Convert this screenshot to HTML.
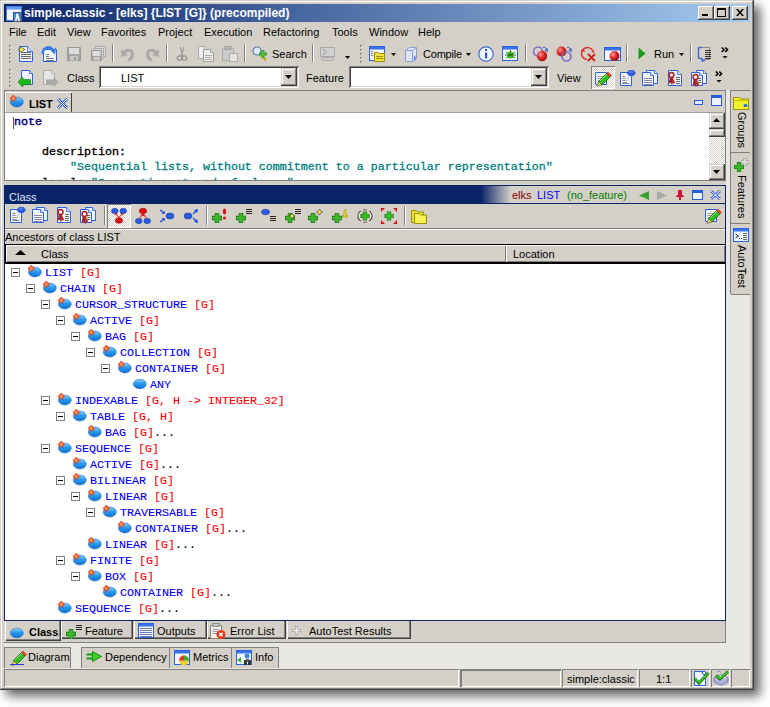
<!DOCTYPE html><html><head><meta charset="utf-8"><style>
*{box-sizing:border-box;margin:0;padding:0}
html,body{width:770px;height:707px;overflow:hidden;background:#fff}
body{position:relative;font-family:"Liberation Sans",sans-serif;font-size:11px;color:#000}
.a{position:absolute}
svg{position:absolute;overflow:visible}
#win{left:0;top:0;width:754px;height:690px;background:#d4d0c8;
 box-shadow:inset -1px -1px #404040,inset 1px 1px #d4d0c8,inset -2px -2px #808080,inset 2px 2px #fff,6px 6px 10px rgba(0,0,0,.62)}
.tbtn{width:16px;height:14px;background:#d4d0c8;box-shadow:inset -1px -1px #404040,inset 1px 1px #fff,inset -2px -2px #808080}
.t{position:absolute;white-space:nowrap;line-height:13px}
.grip{position:absolute;width:2px;background:repeating-linear-gradient(180deg,#fff 0 1px,#808080 1px 2px,transparent 2px 3px)}
.sep{position:absolute;width:2px;box-shadow:inset 1px 0 #808080,inset -1px 0 #fff}
.mono{position:absolute;font-family:"Liberation Mono",monospace;font-weight:normal;font-size:11.67px;letter-spacing:0px;-webkit-text-stroke:0.12px currentColor;white-space:nowrap;line-height:14px}
.combo{position:absolute;height:21px;background:#fff;box-shadow:inset 1px 1px #808080,inset -1px -1px #fff,inset 2px 2px #404040,inset -2px -2px #d4d0c8}
.cbtn{position:absolute;width:16px;height:17px;background:#d4d0c8;box-shadow:inset -1px -1px #404040,inset 1px 1px #d4d0c8,inset -2px -2px #808080,inset 2px 2px #fff}
.btn3{background:#d4d0c8;box-shadow:inset -1px -1px #404040,inset 1px 1px #d4d0c8,inset -2px -2px #808080,inset 2px 2px #fff}
.rt{position:absolute;white-space:nowrap;transform-origin:0 0;transform:rotate(90deg);line-height:13px}
</style></head><body>
<div id="win" class="a"></div>
<div class="a" style="left:4px;top:4px;width:746px;height:18px;background:linear-gradient(90deg,#0a246a,#a6caf0)"></div>
<svg style="left:6px;top:6px" width="16" height="16" viewBox="0 0 16 16">
<rect x="0.5" y="0.5" width="15" height="14" fill="#eef2ff" stroke="#4a7ae8"/>
<rect x="1" y="1" width="14" height="2.5" fill="#6a9af8"/>
<rect x="7.5" y="6.5" width="8" height="9" fill="#3a80e8" stroke="#555"/>
<path d="M10.5 7.5h1.5l2 7.5h-1.5l-1-3-1 3h-1.5z" fill="#fff"/>
</svg>
<div class="t" style="left:24px;top:6px;color:#fff;font-weight:bold;font-size:12px;line-height:14px">simple.classic - [elks] {LIST [G]} (precompiled)</div>
<div class="a tbtn" style="left:698px;top:6px"><div class="a" style="left:4px;top:8px;width:6px;height:2px;background:#000"></div></div>
<div class="a tbtn" style="left:714px;top:6px"><div class="a" style="left:3px;top:2px;width:9px;height:9px;border:1px solid #000;border-top-width:2px"></div></div>
<div class="a tbtn" style="left:732px;top:6px"><svg style="left:4px;top:3px" width="8" height="7"><path d="M0 0h2l2 2.5L6 0h2L5 3.5 8 7H6L4 4.5 2 7H0l3-3.5z" fill="#000"/></svg></div>
<div class="t" style="left:9px;top:26px">File</div>
<div class="t" style="left:37px;top:26px">Edit</div>
<div class="t" style="left:67px;top:26px">View</div>
<div class="t" style="left:101px;top:26px">Favorites</div>
<div class="t" style="left:158px;top:26px">Project</div>
<div class="t" style="left:204px;top:26px">Execution</div>
<div class="t" style="left:263px;top:26px">Refactoring</div>
<div class="t" style="left:332px;top:26px">Tools</div>
<div class="t" style="left:369px;top:26px">Window</div>
<div class="t" style="left:418px;top:26px">Help</div>
<div class="a" style="left:9px;top:45px;width:2px;height:2px;background:#fff;box-shadow:inset 1px 1px #808080"></div>
<div class="a" style="left:9px;top:49px;width:2px;height:2px;background:#fff;box-shadow:inset 1px 1px #808080"></div>
<div class="a" style="left:9px;top:53px;width:2px;height:2px;background:#fff;box-shadow:inset 1px 1px #808080"></div>
<div class="a" style="left:9px;top:57px;width:2px;height:2px;background:#fff;box-shadow:inset 1px 1px #808080"></div>
<div class="a" style="left:9px;top:61px;width:2px;height:2px;background:#fff;box-shadow:inset 1px 1px #808080"></div>
<svg style="left:18px;top:46px" width="16" height="16" viewBox="0 0 16 16"><path d="M1.5 0.5H9.5L14.5 5.5V15.5H1.5Z" fill="#f4f6ff" stroke="#2a62e0"/><path d="M9.5 0.5V5.5H14.5" fill="#d8e4ff" stroke="#2a62e0" stroke-width=".8"/><rect x="3" y="6" width="10" height="1" fill="#666"/><rect x="3" y="8" width="10" height="1" fill="#666"/><rect x="3" y="10" width="10" height="1" fill="#666"/><rect x="3" y="12" width="10" height="1" fill="#666"/><path d="M3.5 0.0Q4.1 2.9 7.0 3.5Q4.1 4.1 3.5 7.0Q2.9 4.1 0.0 3.5Q2.9 2.9 3.5 0.0Z" fill="#fff23a" stroke="#444" stroke-width=".7"/></svg>
<svg style="left:42px;top:46px" width="16" height="16" viewBox="0 0 16 16"><path d="M1.5 3.5H14.5V15.5H1.5Z" fill="#f4f6ff" stroke="#2a62e0"/><rect x="4" y="8" width="3" height="1" fill="#777"/><rect x="4" y="10" width="3" height="1" fill="#777"/><rect x="4" y="12" width="8" height="1" fill="#777"/><rect x="4" y="14" width="8" height="1" fill="#777"/><path d="M1 8C0 2 7 -1 11 4" fill="none" stroke="#3a7ae8" stroke-width="2.6"/><path d="M8.5 4.5L14 2L13 8.5Z" fill="#3a7ae8"/></svg>
<svg style="left:66px;top:46px" width="16" height="16" viewBox="0 0 16 16"><path d="M1.5 1.5H14.5V14.5H1.5Z" fill="#a4a4a4" stroke="#999"/><rect x="3" y="2" width="10" height="6" fill="#dcdcdc"/><rect x="4" y="10" width="8" height="4.5" fill="#c8c8c8"/><rect x="8" y="11" width="2" height="3" fill="#999"/></svg>
<svg style="left:90px;top:46px" width="16" height="16" viewBox="0 0 16 16"><path d="M5.5 0.5H15.5V10.5H5.5Z" fill="#ddd" stroke="#aaa"/><path d="M3.5 2.5H13.5V12.5H3.5Z" fill="#ddd" stroke="#aaa"/><path d="M1.5 4.5H11.5V14.5H1.5Z" fill="#a4a4a4" stroke="#999"/><rect x="2.5" y="5" width="8" height="5" fill="#dcdcdc"/><rect x="3.5" y="11" width="6" height="3.5" fill="#c8c8c8"/></svg>
<div class="sep" style="left:112px;top:44px;height:18px"></div>
<svg style="left:120px;top:46px" width="16" height="16" viewBox="0 0 16 16"><path d="M4.5 6.5C6 3.5 12.5 3 12.5 8.5C12.5 11 10.5 13 8.5 14.5" fill="none" stroke="#a8a8a8" stroke-width="3"/><path d="M1 3.5L1.5 11L8 9Z" fill="#a8a8a8"/></svg>
<svg style="left:144px;top:46px" width="16" height="16" viewBox="0 0 16 16"><path d="M11.5 6.5C10 3.5 3.5 3 3.5 8.5C3.5 11 5.5 13 7.5 14.5" fill="none" stroke="#a8a8a8" stroke-width="3"/><path d="M15 3.5L14.5 11L8 9Z" fill="#a8a8a8"/></svg>
<div class="sep" style="left:166px;top:44px;height:18px"></div>
<svg style="left:174px;top:46px" width="16" height="16" viewBox="0 0 16 16"><path d="M6 1L9 10M10 1L7 10" stroke="#999" stroke-width="1.2"/><circle cx="5.5" cy="12" r="2.2" fill="none" stroke="#999" stroke-width="1.3"/><circle cx="10.5" cy="12" r="2.2" fill="none" stroke="#999" stroke-width="1.3"/></svg>
<svg style="left:198px;top:46px" width="16" height="16" viewBox="0 0 16 16"><path d="M0.5 0.5H6.5L9.5 3.5V12.5H0.5Z" fill="#eee" stroke="#aaa"/><path d="M6.5 0.5V3.5H9.5" fill="#d8e4ff" stroke="#aaa" stroke-width=".8"/><path d="M5.5 3.5H12.5L15.5 6.5V15.5H5.5Z" fill="#eee" stroke="#999"/><path d="M12.5 3.5V6.5H15.5" fill="#d8e4ff" stroke="#999" stroke-width=".8"/><rect x="7" y="9" width="7" height="1" fill="#aaa"/><rect x="7" y="11" width="7" height="1" fill="#aaa"/><rect x="7" y="13" width="7" height="1" fill="#aaa"/><rect x="7" y="15" width="7" height="1" fill="#aaa"/></svg>
<svg style="left:222px;top:46px" width="16" height="16" viewBox="0 0 16 16"><path d="M0.5 2.5H11.5V14.5H0.5Z" fill="#ccc" stroke="#aaa"/><rect x="3" y="0.5" width="6" height="3" fill="#bbb" stroke="#999" stroke-width=".8"/><path d="M7.5 7.5H15.5V15.5H7.5Z" fill="#e4e4e4" stroke="#aaa"/></svg>
<div class="sep" style="left:244px;top:44px;height:18px"></div>
<svg style="left:252px;top:46px" width="16" height="16" viewBox="0 0 16 16"><circle cx="5" cy="5" r="4" fill="#dbeeff" stroke="#5a7ab0" stroke-width="1.2"/><path d="M8 8L14 14.5" stroke="#c8b000" stroke-width="2.5"/><path d="M11 4V12M7 8H15" stroke="#2a9a2a" stroke-width="2.8"/><path d="M11 4.5V11.5M7.5 8H14.5" stroke="#5ad04a" stroke-width="1.2"/></svg>
<div class="t" style="left:272px;top:48px;">Search</div>
<div class="sep" style="left:312px;top:44px;height:18px"></div>
<svg style="left:319px;top:46px" width="16" height="16" viewBox="0 0 16 16"><rect x="1.5" y="1.5" width="14" height="9" fill="#d0d0d0" stroke="#aaa"/><path d="M4 3L7 6 4 9" fill="none" stroke="#aaa" stroke-width="1.5"/><rect x="3" y="11.5" width="12" height="3" rx="1.5" fill="#ccc" stroke="#aaa"/></svg>
<svg style="left:345px;top:56px" width="5" height="3"><path d="M0 0h5L2.5 3z" fill="#000"/></svg>
<div class="a" style="left:360px;top:45px;width:2px;height:2px;background:#fff;box-shadow:inset 1px 1px #808080"></div>
<div class="a" style="left:360px;top:49px;width:2px;height:2px;background:#fff;box-shadow:inset 1px 1px #808080"></div>
<div class="a" style="left:360px;top:53px;width:2px;height:2px;background:#fff;box-shadow:inset 1px 1px #808080"></div>
<div class="a" style="left:360px;top:57px;width:2px;height:2px;background:#fff;box-shadow:inset 1px 1px #808080"></div>
<div class="a" style="left:360px;top:61px;width:2px;height:2px;background:#fff;box-shadow:inset 1px 1px #808080"></div>
<svg style="left:369px;top:46px" width="16" height="16" viewBox="0 0 16 16"><rect x="0.5" y="0.5" width="15" height="14" fill="#f4f6ff" stroke="#2a62e0"/><rect x="1" y="1" width="14" height="2.5" fill="#3a72e8"/><rect x="2" y="5" width="2" height="1" fill="#888"/><rect x="2" y="7" width="2" height="1" fill="#888"/><rect x="2" y="9" width="2" height="1" fill="#888"/><path d="M5.5 6.5H9L10 7.5H15.5V15.5H5.5Z" fill="#f0e040" stroke="#a09000"/><rect x="7" y="10" width="7" height="1" fill="#a09000"/><rect x="7" y="12" width="7" height="1" fill="#a09000"/></svg>
<svg style="left:391px;top:53px" width="5" height="3"><path d="M0 0h5L2.5 3z" fill="#000"/></svg>
<svg style="left:403px;top:46px" width="16" height="16" viewBox="0 0 16 16"><path d="M2.5 4.5L6.5 1.5H13.5V12.5L9.5 15.5H2.5Z" fill="#dce6f8" stroke="#8aa0d0"/><path d="M2.5 4.5H9.5V15.5M9.5 4.5L13.5 1.5" fill="none" stroke="#8aa0d0"/><path d="M11 9C13 11 14 13 12 15 10 13 11 11 11 9Z" fill="#5a8ae8"/></svg>
<div class="t" style="left:423px;top:48px;letter-spacing:-0.2px">Compile</div>
<svg style="left:466px;top:53px" width="5" height="3"><path d="M0 0h5L2.5 3z" fill="#000"/></svg>
<svg style="left:478px;top:46px" width="16" height="16" viewBox="0 0 16 16"><circle cx="8" cy="8" r="7.2" fill="#f4f8ff" stroke="#3a6ad8" stroke-width="1.2"/><rect x="7" y="6.5" width="2.2" height="6" fill="#2a5ad0"/><rect x="7" y="3" width="2.2" height="2" fill="#2a5ad0"/></svg>
<svg style="left:502px;top:46px" width="16" height="16" viewBox="0 0 16 16"><rect x="0.5" y="0.5" width="15" height="14" fill="#f4f6ff" stroke="#2a62e0"/><rect x="1" y="1" width="14" height="2.5" fill="#3a72e8"/><ellipse cx="8.5" cy="9" rx="3" ry="3.5" fill="#40c020"/><path d="M4 6L13 12M13 6L4 12M3 9H14M8.5 4V6" stroke="#207010" stroke-width="1"/></svg>
<div class="sep" style="left:525px;top:44px;height:18px"></div>
<svg style="left:532px;top:46px" width="16" height="16" viewBox="0 0 16 16"><defs><radialGradient id="rb" cx=".35" cy=".35" r=".7"><stop offset="0" stop-color="#ff9a9a"/><stop offset=".5" stop-color="#e02828"/><stop offset="1" stop-color="#a01010"/></radialGradient></defs><circle cx="6" cy="5.5" r="4.5" fill="none" stroke="#7a70c8" stroke-width="1.6"/><circle cx="10" cy="10" r="5.2" fill="url(#rb)"/><path d="M11 1.5C13 1 14.5 2 14.5 4M13 4.5L15 2.5 15.5 5.5Z" fill="none" stroke="#3a5ab8" stroke-width="1"/></svg>
<svg style="left:556px;top:46px" width="16" height="16" viewBox="0 0 16 16"><defs><radialGradient id="rb" cx=".35" cy=".35" r=".7"><stop offset="0" stop-color="#ff9a9a"/><stop offset=".5" stop-color="#e02828"/><stop offset="1" stop-color="#a01010"/></radialGradient></defs><circle cx="5.5" cy="5.5" r="5" fill="url(#rb)"/><circle cx="10.5" cy="10.5" r="4.5" fill="none" stroke="#7a70c8" stroke-width="1.6"/><path d="M11 1.5C13 1 14.5 2 14.5 4M13 4.5L15 2.5 15.5 5.5Z" fill="none" stroke="#3a5ab8" stroke-width="1"/></svg>
<svg style="left:580px;top:46px" width="16" height="16" viewBox="0 0 16 16"><path d="M13.5 7A6 6 0 1 0 7 13.5" fill="none" stroke="#e03030" stroke-width="1.5"/><path d="M1 5L3.5 2L5 6Z" fill="#e03030"/><path d="M8 8L15 15M15 8L8 15" stroke="#d02020" stroke-width="1.8"/></svg>
<svg style="left:604px;top:46px" width="16" height="16" viewBox="0 0 16 16"><defs><radialGradient id="rb" cx=".35" cy=".35" r=".7"><stop offset="0" stop-color="#ff9a9a"/><stop offset=".5" stop-color="#e02828"/><stop offset="1" stop-color="#a01010"/></radialGradient></defs><rect x="0.5" y="1.5" width="16" height="13" fill="#f4f6ff" stroke="#2a62e0"/><rect x="1" y="2" width="15" height="2.5" fill="#3a72e8"/><circle cx="10.5" cy="10" r="5" fill="url(#rb)"/></svg>
<div class="sep" style="left:626px;top:44px;height:18px"></div>
<svg style="left:638px;top:47px" width="8" height="13" viewBox="0 0 8 13"><path d="M0.5 0.5L7.5 6.5 0.5 12.5z" fill="#1a9a1a"/></svg>
<div class="t" style="left:654px;top:48px;">Run</div>
<svg style="left:679px;top:53px" width="5" height="3"><path d="M0 0h5L2.5 3z" fill="#000"/></svg>
<div class="sep" style="left:690px;top:44px;height:18px"></div>
<svg style="left:697px;top:46px" width="16" height="16" viewBox="0 0 16 16"><path d="M5 1.5H2.5Q1.5 1.5 1.5 2.5V11.5Q1.5 12.5 2.5 12.5H5" fill="none" stroke="#3a6ad8" stroke-width="1.4"/><path d="M4.5 12.5L8 14.5 4.5 15.5" fill="#3a6ad8" stroke="#3a6ad8" stroke-width="1"/><path d="M5 1.5H12.5V13.5H6" fill="none" stroke="#888" stroke-width="1"/><rect x="8" y="4" width="6" height="1" fill="#333"/><rect x="8" y="6" width="6" height="1" fill="#333"/><rect x="8" y="8" width="6" height="1" fill="#333"/><rect x="8" y="10" width="6" height="1" fill="#333"/><rect x="8" y="12" width="6" height="1" fill="#333"/></svg>
<svg style="left:721px;top:47px" width="8" height="12" viewBox="0 0 8 12"><path d="M0.8 0.5L3 2.8 0.8 5M4.3 0.5L6.5 2.8 4.3 5" fill="none" stroke="#000" stroke-width="1.6"/><path d="M1.5 9H6.5L4 11.5Z" fill="#000"/></svg>
<div class="a" style="left:9px;top:69px;width:2px;height:2px;background:#fff;box-shadow:inset 1px 1px #808080"></div>
<div class="a" style="left:9px;top:73px;width:2px;height:2px;background:#fff;box-shadow:inset 1px 1px #808080"></div>
<div class="a" style="left:9px;top:77px;width:2px;height:2px;background:#fff;box-shadow:inset 1px 1px #808080"></div>
<div class="a" style="left:9px;top:81px;width:2px;height:2px;background:#fff;box-shadow:inset 1px 1px #808080"></div>
<div class="a" style="left:9px;top:85px;width:2px;height:2px;background:#fff;box-shadow:inset 1px 1px #808080"></div>
<svg style="left:17px;top:70px" width="16" height="16" viewBox="0 0 16 16"><path d="M4.5 0.5H12.5L15.5 3.5V14.5H4.5Z" fill="#f0f2ff" stroke="#2a62e0"/><path d="M12.5 0.5V3.5H15.5" fill="#d8e4ff" stroke="#2a62e0" stroke-width=".8"/><path d="M13.5 9.5H6V7.5H5L1 12 5 16.5H6V14.5H13.5Z" fill="#18b818" stroke="#0a800a" stroke-width=".6"/></svg>
<svg style="left:42px;top:70px" width="16" height="16" viewBox="0 0 16 16"><path d="M1.5 0.5H9.5L12.5 3.5V14.5H1.5Z" fill="#e4e4e4" stroke="#aaa"/><path d="M9.5 0.5V3.5H12.5" fill="#d8e4ff" stroke="#aaa" stroke-width=".8"/><path d="M4 9.5H11.5V7.5H12.5L16 12 12.5 16.5H11.5V14.5H4Z" fill="#a8a8a8"/></svg>
<div class="t" style="left:67px;top:72px;">Class</div>
<div class="combo" style="left:99px;top:66px;width:200px;height:22px"></div>
<div class="cbtn" style="left:281px;top:68px;width:16px;height:18px"></div>
<svg style="left:285px;top:75px" width="7" height="4" viewBox="0 0 7 4"><path d="M0 0h7L3.5 4z" fill="#000"/></svg>
<div class="t" style="left:121px;top:72px;">LIST</div>
<div class="t" style="left:306px;top:72px;">Feature</div>
<div class="combo" style="left:349px;top:66px;width:200px;height:22px"></div>
<div class="cbtn" style="left:531px;top:68px;width:16px;height:18px"></div>
<svg style="left:535px;top:75px" width="7" height="4" viewBox="0 0 7 4"><path d="M0 0h7L3.5 4z" fill="#000"/></svg>
<div class="t" style="left:557px;top:72px;">View</div>
<div class="a" style="left:591px;top:66px;width:24px;height:23px;box-shadow:inset 1px 1px #808080,inset -1px -1px #fff;background:repeating-conic-gradient(#fff 0 25%,#d4d0c8 0 50%) 0 0/2px 2px"></div>
<svg style="left:595px;top:70px" width="16" height="16" viewBox="0 0 16 16"><path d="M0.5 2.5H11.5V14.5H0.5Z" fill="#f4f6ff" stroke="#2a62e0"/><rect x="2.5" y="6" width="6" height="1" fill="#999"/><rect x="2.5" y="8" width="6" height="1" fill="#999"/><rect x="2.5" y="10" width="6" height="1" fill="#999"/><rect x="2.5" y="12" width="6" height="1" fill="#999"/><path d="M3.5 11.5L11.5 3.5 15 7 7 15Z" fill="#30c020" stroke="#1a6a10" stroke-width=".8"/><path d="M5 11L12 4" stroke="#8af070" stroke-width="1"/><path d="M11.5 3.5L13 2 16.5 5.5 15 7Z" fill="#f04020" stroke="#a02010" stroke-width=".5"/><path d="M3.5 11.5L7 15 2 16.5Z" fill="#e8d050" stroke="#444" stroke-width=".5"/></svg>
<svg style="left:619px;top:70px" width="16" height="16" viewBox="0 0 16 16"><path d="M1.5 2.5H12.5V15.5H1.5Z" fill="#f4f6ff" stroke="#2a62e0"/><rect x="3.5" y="6" width="3" height="1" fill="#888"/><rect x="3.5" y="8" width="3" height="1" fill="#888"/><rect x="3.5" y="10" width="3" height="1" fill="#888"/><rect x="3.5" y="12" width="3" height="1" fill="#888"/><path d="M7 13L10 6" stroke="#555" stroke-width=".8" stroke-dasharray="1 1"/><rect x="3.5" y="13" width="7" height="1" fill="#888"/><path d="M8 3L10 0.5H14.5L16.5 3 14.5 5.5H10Z" fill="#2a5ae8" stroke="#1a3ab0" stroke-width=".6"/><path d="M10 2H14" stroke="#7a9af8" stroke-width="1"/></svg>
<svg style="left:642px;top:70px" width="16" height="16" viewBox="0 0 16 16"><path d="M4.5 0.5H12.5L15.5 3.5V13.5H4.5Z" fill="#f4f6ff" stroke="#2a62e0"/><path d="M12.5 0.5V3.5H15.5" fill="#d8e4ff" stroke="#2a62e0" stroke-width=".8"/><path d="M0.5 2.5H8.5L11.5 5.5V15.5H0.5Z" fill="#f4f6ff" stroke="#2a62e0"/><path d="M8.5 2.5V5.5H11.5" fill="#d8e4ff" stroke="#2a62e0" stroke-width=".8"/><rect x="2" y="8" width="8" height="1" fill="#8a8a9a"/><rect x="2" y="10" width="8" height="1" fill="#8a8a9a"/><rect x="2" y="12" width="8" height="1" fill="#8a8a9a"/><rect x="2" y="14" width="8" height="1" fill="#8a8a9a"/></svg>
<svg style="left:667px;top:70px" width="16" height="16" viewBox="0 0 16 16"><path d="M1.5 0.5H10.5L14.5 4.5V15.5H1.5Z" fill="#f4f6ff" stroke="#2a62e0"/><path d="M10.5 0.5V4.5H14.5" fill="#d8e4ff" stroke="#2a62e0" stroke-width=".8"/><rect x="9" y="7" width="4" height="1" fill="#666"/><rect x="9" y="9" width="4" height="1" fill="#666"/><rect x="9" y="11" width="4" height="1" fill="#666"/><rect x="9" y="13" width="4" height="1" fill="#666"/><path d="M3 6L1.5 14L3.5 12.5L5 15L6 7Z" fill="#a02020"/><path d="M5 6L8.5 13.5 6.5 13 6 15.5 3.5 7Z" fill="#b02a2a"/><circle cx="4.5" cy="5" r="3.2" fill="#b02020"/><circle cx="4.5" cy="5" r="1.7" fill="#fff"/></svg>
<svg style="left:691px;top:70px" width="16" height="16" viewBox="0 0 16 16"><path d="M5.5 0.5H12.5L15.5 3.5V13.5H5.5Z" fill="#f4f6ff" stroke="#2a62e0"/><path d="M12.5 0.5V3.5H15.5" fill="#d8e4ff" stroke="#2a62e0" stroke-width=".8"/><path d="M0.5 2.5H8.5L11.5 5.5V15.5H0.5Z" fill="#f4f6ff" stroke="#2a62e0"/><path d="M8.5 2.5V5.5H11.5" fill="#d8e4ff" stroke="#2a62e0" stroke-width=".8"/><rect x="7" y="8" width="3" height="1" fill="#666"/><rect x="7" y="10" width="3" height="1" fill="#666"/><rect x="7" y="12" width="3" height="1" fill="#666"/><g transform="translate(0 2)"><path d="M3 6L1.5 14L3.5 12.5L5 15L6 7Z" fill="#a02020"/><path d="M5 6L8.5 13.5 6.5 13 6 15.5 3.5 7Z" fill="#b02a2a"/><circle cx="4.5" cy="5" r="3.2" fill="#b02020"/><circle cx="4.5" cy="5" r="1.7" fill="#fff"/></g></svg>
<svg style="left:715px;top:71px" width="8" height="12" viewBox="0 0 8 12"><path d="M0.8 0.5L3 2.8 0.8 5M4.3 0.5L6.5 2.8 4.3 5" fill="none" stroke="#000" stroke-width="1.6"/><path d="M1.5 9H6.5L4 11.5Z" fill="#000"/></svg>
<div class="a" style="left:726px;top:90px;width:24px;height:579px;background:#e9e7e2"></div>
<div class="a" style="left:730px;top:90px;width:21px;height:204px;background:#d4d0c8;box-shadow:inset 1px 0 #808080,inset 0 1px #808080"></div>
<div class="a" style="left:731px;top:152px;width:19px;height:1px;background:#808080"></div>
<div class="a" style="left:731px;top:223px;width:19px;height:1px;background:#808080"></div>
<div class="a" style="left:731px;top:294px;width:19px;height:1px;background:#808080"></div>
<svg style="left:733px;top:95px" width="16" height="16" viewBox="0 0 16 16"><path d="M0.5 2.5H6L7.5 4H15.5V14.5H0.5Z" fill="#f0f030" stroke="#9a9000"/><path d="M0.5 5.5H15.5" stroke="#c8c000"/><ellipse cx="12.5" cy="10.5" rx="2" ry="1.6" fill="#1a6ae8"/></svg>
<div class="rt" style="left:748px;top:112px">Groups</div>
<svg style="left:733px;top:157px" width="16" height="16" viewBox="0 0 16 16"><path d="M6 5V15M1 10H11" stroke="#1a6a10" stroke-width="4.2"/><path d="M6 5.6V14.4M1.6 10H10.4" stroke="#3ab82a" stroke-width="3"/><path d="M12 1V9M8 5H16" stroke="#999" stroke-width="3.2"/><path d="M12 1.5V8.5M8.5 5H15.5" stroke="#ddd" stroke-width="1.8"/></svg>
<div class="rt" style="left:748px;top:175px">Features</div>
<svg style="left:733px;top:228px" width="16" height="16" viewBox="0 0 16 16"><rect x="0.5" y="0.5" width="15" height="13" fill="#f4f6ff" stroke="#2a62e0"/><rect x="1" y="1" width="14" height="2.5" fill="#3a72e8"/><path d="M2.5 6L5.5 8 2.5 10" fill="none" stroke="#222" stroke-width="1"/><rect x="6" y="10" width="1" height="1" fill="#222"/><rect x="8" y="10" width="1" height="1" fill="#222"/><rect x="10" y="5" width="4" height="1" fill="#666"/><rect x="10" y="7" width="4" height="1" fill="#666"/><rect x="10" y="9" width="4" height="1" fill="#666"/><rect x="10" y="11" width="4" height="1" fill="#666"/></svg>
<div class="rt" style="left:748px;top:245px">AutoTest</div>
<div class="a" style="left:4px;top:90px;width:722px;height:91px;background:#d4d0c8;box-shadow:inset 1px 1px #808080,inset -1px -1px #808080"></div>
<div class="a" style="left:5px;top:92px;width:67px;height:20px;background:#d4d0c8;box-shadow:inset 1px 1px #fff,inset -1px 0 #404040"></div>
<div class="a" style="left:5px;top:112px;width:720px;height:1px;background:#a0a0a0"></div>
<svg style="left:10px;top:95px" width="16" height="16" viewBox="0 0 16 16"><defs><linearGradient id="cg" x1="0" y1="0" x2="0" y2="1"><stop offset="0" stop-color="#8ad4ff"/><stop offset=".45" stop-color="#2a9af0"/><stop offset="1" stop-color="#1070d0"/></linearGradient></defs><ellipse cx="6.8" cy="7" rx="6.5" ry="5" fill="url(#cg)" stroke="#1a60b0" stroke-width=".5"/><path d="M3.3 0L6.6 3.4 3.3 6.8 0 3.4Z" fill="#f05a2a" stroke="#c02010" stroke-width=".5"/><path d="M3.3 1.5L5 3.4 3.3 5.2 1.6 3.4Z" fill="#ff9a6a"/></svg>
<div class="t" style="left:29px;top:98px;font-weight:bold;font-size:11px">LIST</div>
<svg style="left:57px;top:98px" width="11" height="11" viewBox="0 0 11 11"><path d="M1 1l9 9M10 1l-9 9" stroke="#2a5ae0" stroke-width="2.5"/><path d="M1 1l9 9M10 1l-9 9" stroke="#fff" stroke-width="1"/></svg>
<svg style="left:694px;top:100px" width="9" height="5" viewBox="0 0 9 5"><rect x="0.5" y="0.5" width="8" height="4" fill="#dde8ff" stroke="#2a5ae0"/></svg>
<svg style="left:711px;top:95px" width="11" height="11" viewBox="0 0 11 11"><rect x="0.5" y="0.5" width="10" height="10" fill="#eef2ff" stroke="#2a5ae0"/><rect x="1" y="1" width="9" height="2" fill="#2a5ae0"/></svg>
<div class="a" style="left:5px;top:113px;width:720px;height:67px;background:#fff;overflow:hidden">
<div class="a" style="left:8px;top:4px;width:1px;height:12px;background:#555"></div>
<div class="mono" style="left:9px;top:2px;color:#000080;-webkit-text-stroke:0.45px #000080">note</div>
<div class="mono" style="left:37px;top:32px;-webkit-text-stroke:0.35px #000">description:</div>
<div class="mono" style="left:65px;top:47px;color:#008080;-webkit-text-stroke:0.3px #008080">"Sequential lists, without commitment to a particular representation"</div>
<div class="mono" style="left:37px;top:63px;-webkit-text-stroke:0.3px">legal: <span style="color:#008080">"See notice at end of class."</span></div>
</div>
<div class="a" style="left:5px;top:180px;width:720px;height:1px;background:#808080"></div>
<div class="a" style="left:709px;top:113px;width:16px;height:67px;background:repeating-conic-gradient(#fff 0 25%,#d4d0c8 0 50%) 0 0/2px 2px"></div>
<div class="a btn3" style="left:709px;top:113px;width:16px;height:16px"></div>
<svg style="left:713px;top:118px" width="7" height="4" viewBox="0 0 7 4"><path d="M0 4h7L3.5 0z" fill="#000"/></svg>
<div class="a btn3" style="left:709px;top:129px;width:16px;height:8px"></div>
<div class="a btn3" style="left:709px;top:164px;width:16px;height:16px"></div>
<svg style="left:713px;top:170px" width="7" height="4" viewBox="0 0 7 4"><path d="M0 0h7L3.5 4z" fill="#000"/></svg>
<div class="a" style="left:4px;top:185px;width:722px;height:436px;border:1px solid #0a246a;background:#d4d0c8"></div>
<div class="a" style="left:5px;top:186px;width:720px;height:17px;background:linear-gradient(90deg,#0a246a 0,#0a246a 476px,#d4d0c8 506px)"></div>
<div class="a" style="left:5px;top:203px;width:720px;height:1px;background:#0a246a"></div>
<div class="t" style="left:9px;top:191px;color:#dfe4f0">Class</div>
<div class="t" style="left:512px;top:189px;color:#800000">elks</div>
<div class="t" style="left:537px;top:189px;color:#0000ff">LIST</div>
<div class="t" style="left:567px;top:189px;color:#008000">(no_feature)</div>
<svg style="left:639px;top:191px" width="10" height="9" viewBox="0 0 10 9"><path d="M10 0v9L0 4.5z" fill="#3aa030"/></svg>
<svg style="left:657px;top:191px" width="10" height="9" viewBox="0 0 10 9"><path d="M0 0v9l10-4.5z" fill="#a8a8a8"/></svg>
<svg style="left:676px;top:190px" width="8" height="10" viewBox="0 0 8 10"><path d="M2 0h4v5l2 1v1H5v3H3V7H0V6l2-1z" fill="#d01030"/></svg>
<svg style="left:692px;top:190px" width="11" height="10" viewBox="0 0 11 10"><rect x="0.5" y="0.5" width="10" height="9" fill="#eef2ff" stroke="#2a5ae0"/><rect x="1" y="1" width="9" height="2" fill="#2a5ae0"/></svg>
<svg style="left:710px;top:190px" width="11" height="10" viewBox="0 0 11 10"><path d="M1 1l9 8M10 1l-9 8" stroke="#2a5ae0" stroke-width="2.5"/><path d="M1 1l9 8M10 1l-9 8" stroke="#fff" stroke-width="1"/></svg>
<svg style="left:9px;top:207px" width="16" height="16" viewBox="0 0 16 16"><path d="M1.5 2.5H12.5V15.5H1.5Z" fill="#f4f6ff" stroke="#2a62e0"/><rect x="3.5" y="6" width="3" height="1" fill="#888"/><rect x="3.5" y="8" width="3" height="1" fill="#888"/><rect x="3.5" y="10" width="3" height="1" fill="#888"/><rect x="3.5" y="12" width="3" height="1" fill="#888"/><path d="M7 13L10 6" stroke="#555" stroke-width=".8" stroke-dasharray="1 1"/><rect x="3.5" y="13" width="7" height="1" fill="#888"/><path d="M8 3L10 0.5H14.5L16.5 3 14.5 5.5H10Z" fill="#2a5ae8" stroke="#1a3ab0" stroke-width=".6"/><path d="M10 2H14" stroke="#7a9af8" stroke-width="1"/></svg>
<svg style="left:32px;top:207px" width="16" height="16" viewBox="0 0 16 16"><path d="M4.5 0.5H12.5L15.5 3.5V13.5H4.5Z" fill="#f4f6ff" stroke="#2a62e0"/><path d="M12.5 0.5V3.5H15.5" fill="#d8e4ff" stroke="#2a62e0" stroke-width=".8"/><path d="M0.5 2.5H8.5L11.5 5.5V15.5H0.5Z" fill="#f4f6ff" stroke="#2a62e0"/><path d="M8.5 2.5V5.5H11.5" fill="#d8e4ff" stroke="#2a62e0" stroke-width=".8"/><rect x="2" y="8" width="8" height="1" fill="#8a8a9a"/><rect x="2" y="10" width="8" height="1" fill="#8a8a9a"/><rect x="2" y="12" width="8" height="1" fill="#8a8a9a"/><rect x="2" y="14" width="8" height="1" fill="#8a8a9a"/></svg>
<svg style="left:56px;top:207px" width="16" height="16" viewBox="0 0 16 16"><path d="M1.5 0.5H10.5L14.5 4.5V15.5H1.5Z" fill="#f4f6ff" stroke="#2a62e0"/><path d="M10.5 0.5V4.5H14.5" fill="#d8e4ff" stroke="#2a62e0" stroke-width=".8"/><rect x="9" y="7" width="4" height="1" fill="#666"/><rect x="9" y="9" width="4" height="1" fill="#666"/><rect x="9" y="11" width="4" height="1" fill="#666"/><rect x="9" y="13" width="4" height="1" fill="#666"/><path d="M3 6L1.5 14L3.5 12.5L5 15L6 7Z" fill="#a02020"/><path d="M5 6L8.5 13.5 6.5 13 6 15.5 3.5 7Z" fill="#b02a2a"/><circle cx="4.5" cy="5" r="3.2" fill="#b02020"/><circle cx="4.5" cy="5" r="1.7" fill="#fff"/></svg>
<svg style="left:80px;top:207px" width="16" height="16" viewBox="0 0 16 16"><path d="M5.5 0.5H12.5L15.5 3.5V13.5H5.5Z" fill="#f4f6ff" stroke="#2a62e0"/><path d="M12.5 0.5V3.5H15.5" fill="#d8e4ff" stroke="#2a62e0" stroke-width=".8"/><path d="M0.5 2.5H8.5L11.5 5.5V15.5H0.5Z" fill="#f4f6ff" stroke="#2a62e0"/><path d="M8.5 2.5V5.5H11.5" fill="#d8e4ff" stroke="#2a62e0" stroke-width=".8"/><rect x="7" y="8" width="3" height="1" fill="#666"/><rect x="7" y="10" width="3" height="1" fill="#666"/><rect x="7" y="12" width="3" height="1" fill="#666"/><g transform="translate(0 2)"><path d="M3 6L1.5 14L3.5 12.5L5 15L6 7Z" fill="#a02020"/><path d="M5 6L8.5 13.5 6.5 13 6 15.5 3.5 7Z" fill="#b02a2a"/><circle cx="4.5" cy="5" r="3.2" fill="#b02020"/><circle cx="4.5" cy="5" r="1.7" fill="#fff"/></g></svg>
<div class="sep" style="left:104px;top:206px;height:19px"></div>
<div class="a" style="left:107px;top:204px;width:24px;height:24px;box-shadow:inset 1px 1px #808080,inset -1px -1px #fff;background:repeating-conic-gradient(#fff 0 25%,#d4d0c8 0 50%) 0 0/2px 2px"></div>
<svg style="left:111px;top:208px" width="16" height="16" viewBox="0 0 16 16"><ellipse cx="3.8" cy="3" rx="3.3" ry="2.7" fill="#2a5ae8" stroke="#1a3a9a" stroke-width=".6"/><ellipse cx="12.2" cy="3" rx="3.3" ry="2.7" fill="#2a5ae8" stroke="#1a3a9a" stroke-width=".6"/><ellipse cx="8" cy="12.5" rx="3.6" ry="2.8" fill="#e01010" stroke="#900" stroke-width=".6"/><path d="M8 9.5L4.5 5.5M8 9.5L11.5 5.5" stroke="#e01010" stroke-width="1"/><path d="M4 5L6.5 5.5 4.5 7.5Z" fill="#e01010"/><path d="M12 5L9.5 5.5 11.5 7.5Z" fill="#e01010"/></svg>
<svg style="left:135px;top:208px" width="16" height="16" viewBox="0 0 16 16"><ellipse cx="8" cy="3" rx="3.6" ry="2.8" fill="#e01010" stroke="#900" stroke-width=".6"/><ellipse cx="3.8" cy="13" rx="3.3" ry="2.7" fill="#2a5ae8" stroke="#1a3a9a" stroke-width=".6"/><ellipse cx="12.2" cy="13" rx="3.3" ry="2.7" fill="#2a5ae8" stroke="#1a3a9a" stroke-width=".6"/><path d="M8 6L4.5 10.5M8 6L11.5 10.5" stroke="#e01010" stroke-width="1"/><path d="M8 5.5L5.5 7.5 8 8Z" fill="#e01010"/><path d="M8 5.5L10.5 7.5 8 8Z" fill="#e01010"/></svg>
<svg style="left:159px;top:208px" width="16" height="16" viewBox="0 0 16 16"><ellipse cx="11" cy="8" rx="4" ry="3" fill="#2a5ae8" stroke="#1a3a9a" stroke-width=".6"/><path d="M1 2L5 5M1 14L5 11" stroke="#1a4ae8" stroke-width="1.2"/><path d="M6 6L2.5 5.5 5.5 3Z M6 10L2.5 10.5 5.5 13Z" fill="#1a4ae8"/></svg>
<svg style="left:183px;top:208px" width="16" height="16" viewBox="0 0 16 16"><ellipse cx="5" cy="8" rx="4" ry="3" fill="#2a5ae8" stroke="#1a3a9a" stroke-width=".6"/><path d="M10 6L14 2M10 10L14 14" stroke="#1a4ae8" stroke-width="1.2"/><path d="M15 1L11 2 14 5Z M15 15L11 14 14 11Z" fill="#1a4ae8"/></svg>
<div class="sep" style="left:206px;top:206px;height:19px"></div>
<svg style="left:212px;top:208px" width="16" height="16" viewBox="0 0 16 16"><path d="M5 5V15M0 10H10" stroke="#1a6a10" stroke-width="4.4"/><path d="M5 5.6V14.4M0.6 10H9.4" stroke="#3ab82a" stroke-width="3.2"/><ellipse cx="12.5" cy="3.5" rx="1.6" ry="3" fill="#e01010"/><circle cx="12.5" cy="10" r="1.5" fill="#e01010"/></svg>
<svg style="left:236px;top:208px" width="16" height="16" viewBox="0 0 16 16"><path d="M5 5V15M0 10H10" stroke="#1a6a10" stroke-width="4.4"/><path d="M5 5.6V14.4M0.6 10H9.4" stroke="#3ab82a" stroke-width="3.2"/><rect x="10" y="1" width="6" height="1" fill="#222"/><rect x="10" y="3" width="6" height="1" fill="#222"/><rect x="10" y="5" width="6" height="1" fill="#222"/></svg>
<svg style="left:261px;top:208px" width="16" height="16" viewBox="0 0 16 16"><ellipse cx="4.5" cy="4" rx="4" ry="2.8" fill="#2a5ae8" stroke="#1a3a9a" stroke-width=".6"/><rect x="9" y="8" width="6" height="1" fill="#222"/><rect x="9" y="10" width="6" height="1" fill="#222"/><rect x="9" y="12" width="6" height="1" fill="#222"/></svg>
<svg style="left:285px;top:208px" width="16" height="16" viewBox="0 0 16 16"><path d="M5 5V15M0 10H10" stroke="#1a6a10" stroke-width="4.4"/><path d="M5 5.6V14.4M0.6 10H9.4" stroke="#3ab82a" stroke-width="3.2"/><rect x="10" y="1" width="6" height="1" fill="#222"/><rect x="10" y="3" width="6" height="1" fill="#222"/><rect x="10" y="5" width="6" height="1" fill="#222"/><path d="M7 5Q7.6 7.4 10 8Q7.6 8.6 7 11Q6.4 8.6 4 8Q6.4 7.4 7 5Z" fill="#fff23a" stroke="#444" stroke-width=".7"/></svg>
<svg style="left:308px;top:208px" width="16" height="16" viewBox="0 0 16 16"><path d="M5 5V15M0 10H10" stroke="#1a6a10" stroke-width="4.4"/><path d="M5 5.6V14.4M0.6 10H9.4" stroke="#3ab82a" stroke-width="3.2"/><path d="M11.5 1Q12.1 3.4 14.5 4Q12.1 4.6 11.5 7Q10.9 4.6 8.5 4Q10.9 3.4 11.5 1Z" fill="#fff23a" stroke="#444" stroke-width=".7"/></svg>
<svg style="left:332px;top:208px" width="16" height="16" viewBox="0 0 16 16"><path d="M5 5V15M0 10H10" stroke="#1a6a10" stroke-width="4.4"/><path d="M5 5.6V14.4M0.6 10H9.4" stroke="#3ab82a" stroke-width="3.2"/><path d="M12 2.5L14 1V7.5H15.5V9H10.5V7.5H12Z" fill="#e8e020" stroke="#9a8a00" stroke-width=".6"/></svg>
<svg style="left:357px;top:208px" width="16" height="16" viewBox="0 0 16 16"><ellipse cx="8" cy="8" rx="7" ry="6.2" fill="none" stroke="#444" stroke-width="1.3"/><ellipse cx="8" cy="8" rx="6" ry="5.2" fill="none" stroke="#fff" stroke-width=".8"/><path d="M5 0V16M11 0V16" stroke="#d4d0c8" stroke-width="2.5"/><path d="M8 3.5V12.5M3.5 8H12.5" stroke="#1a6a10" stroke-width="4.2"/><path d="M8 4.1V11.9M4.1 8H11.9" stroke="#3ab82a" stroke-width="3"/></svg>
<svg style="left:381px;top:208px" width="16" height="16" viewBox="0 0 16 16"><path d="M8 3.5V12.5M3.5 8H12.5" stroke="#1a6a10" stroke-width="4.2"/><path d="M8 4.1V11.9M4.1 8H11.9" stroke="#3ab82a" stroke-width="3"/><path d="M0 0H4L0 4ZM16 0H12L16 4ZM0 16H4L0 12ZM16 16H12L16 12Z" fill="#e01010"/></svg>
<div class="sep" style="left:404px;top:206px;height:19px"></div>
<svg style="left:411px;top:208px" width="16" height="16" viewBox="0 0 16 16"><path d="M0.5 2.5H5.5L7 4H12.5V14.5H0.5Z" fill="#e8e030" stroke="#9a9000"/><path d="M3.5 5.5H8.5L10 7H15.5V15.5H3.5Z" fill="#f8f050" stroke="#9a9000"/></svg>
<svg style="left:705px;top:207px" width="16" height="16" viewBox="0 0 16 16"><path d="M0.5 2.5H11.5V14.5H0.5Z" fill="#f4f6ff" stroke="#2a62e0"/><rect x="2.5" y="6" width="6" height="1" fill="#999"/><rect x="2.5" y="8" width="6" height="1" fill="#999"/><rect x="2.5" y="10" width="6" height="1" fill="#999"/><rect x="2.5" y="12" width="6" height="1" fill="#999"/><path d="M3.5 11.5L11.5 3.5 15 7 7 15Z" fill="#30c020" stroke="#1a6a10" stroke-width=".8"/><path d="M5 11L12 4" stroke="#8af070" stroke-width="1"/><path d="M11.5 3.5L13 2 16.5 5.5 15 7Z" fill="#f04020" stroke="#a02010" stroke-width=".5"/><path d="M3.5 11.5L7 15 2 16.5Z" fill="#e8d050" stroke="#444" stroke-width=".5"/></svg>
<div class="a" style="left:5px;top:228px;width:720px;height:1px;background:#808080"></div>
<div class="a" style="left:5px;top:229px;width:720px;height:1px;background:#fff"></div>
<div class="t" style="left:5px;top:231px;">Ancestors of class LIST</div>
<div class="a" style="left:5px;top:244px;width:720px;height:20px;background:#000"></div>
<div class="a" style="left:6px;top:245px;width:500px;height:17px;background:#d4d0c8;box-shadow:inset 1px 1px #fff,inset -1px -1px #808080"></div>
<div class="a" style="left:506px;top:245px;width:219px;height:17px;background:#d4d0c8;box-shadow:inset 1px 1px #fff,inset -1px -1px #808080"></div>
<svg style="left:15px;top:250px" width="11" height="5" viewBox="0 0 11 5"><path d="M0 5h11L5.5 0z" fill="#000"/></svg>
<div class="t" style="left:41px;top:248px;">Class</div>
<div class="t" style="left:513px;top:248px;">Location</div>
<div class="a" style="left:5px;top:264px;width:720px;height:356px;background:#fff"></div>
<div class="a" style="left:11px;top:268px;width:9px;height:9px;border:1px solid #808080;background:#fff"><div class="a" style="left:1px;top:3px;width:5px;height:1px;background:#000"></div></div>
<svg style="left:28px;top:265px" width="16" height="16" viewBox="0 0 16 16"><defs><linearGradient id="cg" x1="0" y1="0" x2="0" y2="1"><stop offset="0" stop-color="#8ad4ff"/><stop offset=".45" stop-color="#2a9af0"/><stop offset="1" stop-color="#1070d0"/></linearGradient></defs><ellipse cx="6.8" cy="7" rx="6.5" ry="5" fill="url(#cg)" stroke="#1a60b0" stroke-width=".5"/><path d="M3.3 0L6.6 3.4 3.3 6.8 0 3.4Z" fill="#f05a2a" stroke="#c02010" stroke-width=".5"/><path d="M3.3 1.5L5 3.4 3.3 5.2 1.6 3.4Z" fill="#ff9a6a"/></svg>
<div class="mono" style="left:45px;top:266px;color:#0000ff">LIST<span style="color:#ff0000"> [G]</span><span style="color:#000"></span></div>
<div class="a" style="left:26px;top:284px;width:9px;height:9px;border:1px solid #808080;background:#fff"><div class="a" style="left:1px;top:3px;width:5px;height:1px;background:#000"></div></div>
<svg style="left:43px;top:281px" width="16" height="16" viewBox="0 0 16 16"><defs><linearGradient id="cg" x1="0" y1="0" x2="0" y2="1"><stop offset="0" stop-color="#8ad4ff"/><stop offset=".45" stop-color="#2a9af0"/><stop offset="1" stop-color="#1070d0"/></linearGradient></defs><ellipse cx="6.8" cy="7" rx="6.5" ry="5" fill="url(#cg)" stroke="#1a60b0" stroke-width=".5"/><path d="M3.3 0L6.6 3.4 3.3 6.8 0 3.4Z" fill="#f05a2a" stroke="#c02010" stroke-width=".5"/><path d="M3.3 1.5L5 3.4 3.3 5.2 1.6 3.4Z" fill="#ff9a6a"/></svg>
<div class="mono" style="left:60px;top:282px;color:#0000ff">CHAIN<span style="color:#ff0000"> [G]</span><span style="color:#000"></span></div>
<div class="a" style="left:41px;top:300px;width:9px;height:9px;border:1px solid #808080;background:#fff"><div class="a" style="left:1px;top:3px;width:5px;height:1px;background:#000"></div></div>
<svg style="left:58px;top:297px" width="16" height="16" viewBox="0 0 16 16"><defs><linearGradient id="cg" x1="0" y1="0" x2="0" y2="1"><stop offset="0" stop-color="#8ad4ff"/><stop offset=".45" stop-color="#2a9af0"/><stop offset="1" stop-color="#1070d0"/></linearGradient></defs><ellipse cx="6.8" cy="7" rx="6.5" ry="5" fill="url(#cg)" stroke="#1a60b0" stroke-width=".5"/><path d="M3.3 0L6.6 3.4 3.3 6.8 0 3.4Z" fill="#f05a2a" stroke="#c02010" stroke-width=".5"/><path d="M3.3 1.5L5 3.4 3.3 5.2 1.6 3.4Z" fill="#ff9a6a"/></svg>
<div class="mono" style="left:75px;top:298px;color:#0000ff">CURSOR_STRUCTURE<span style="color:#ff0000"> [G]</span><span style="color:#000"></span></div>
<div class="a" style="left:56px;top:316px;width:9px;height:9px;border:1px solid #808080;background:#fff"><div class="a" style="left:1px;top:3px;width:5px;height:1px;background:#000"></div></div>
<svg style="left:73px;top:313px" width="16" height="16" viewBox="0 0 16 16"><defs><linearGradient id="cg" x1="0" y1="0" x2="0" y2="1"><stop offset="0" stop-color="#8ad4ff"/><stop offset=".45" stop-color="#2a9af0"/><stop offset="1" stop-color="#1070d0"/></linearGradient></defs><ellipse cx="6.8" cy="7" rx="6.5" ry="5" fill="url(#cg)" stroke="#1a60b0" stroke-width=".5"/><path d="M3.3 0L6.6 3.4 3.3 6.8 0 3.4Z" fill="#f05a2a" stroke="#c02010" stroke-width=".5"/><path d="M3.3 1.5L5 3.4 3.3 5.2 1.6 3.4Z" fill="#ff9a6a"/></svg>
<div class="mono" style="left:90px;top:314px;color:#0000ff">ACTIVE<span style="color:#ff0000"> [G]</span><span style="color:#000"></span></div>
<div class="a" style="left:71px;top:332px;width:9px;height:9px;border:1px solid #808080;background:#fff"><div class="a" style="left:1px;top:3px;width:5px;height:1px;background:#000"></div></div>
<svg style="left:88px;top:329px" width="16" height="16" viewBox="0 0 16 16"><defs><linearGradient id="cg" x1="0" y1="0" x2="0" y2="1"><stop offset="0" stop-color="#8ad4ff"/><stop offset=".45" stop-color="#2a9af0"/><stop offset="1" stop-color="#1070d0"/></linearGradient></defs><ellipse cx="6.8" cy="7" rx="6.5" ry="5" fill="url(#cg)" stroke="#1a60b0" stroke-width=".5"/><path d="M3.3 0L6.6 3.4 3.3 6.8 0 3.4Z" fill="#f05a2a" stroke="#c02010" stroke-width=".5"/><path d="M3.3 1.5L5 3.4 3.3 5.2 1.6 3.4Z" fill="#ff9a6a"/></svg>
<div class="mono" style="left:105px;top:330px;color:#0000ff">BAG<span style="color:#ff0000"> [G]</span><span style="color:#000"></span></div>
<div class="a" style="left:86px;top:348px;width:9px;height:9px;border:1px solid #808080;background:#fff"><div class="a" style="left:1px;top:3px;width:5px;height:1px;background:#000"></div></div>
<svg style="left:103px;top:345px" width="16" height="16" viewBox="0 0 16 16"><defs><linearGradient id="cg" x1="0" y1="0" x2="0" y2="1"><stop offset="0" stop-color="#8ad4ff"/><stop offset=".45" stop-color="#2a9af0"/><stop offset="1" stop-color="#1070d0"/></linearGradient></defs><ellipse cx="6.8" cy="7" rx="6.5" ry="5" fill="url(#cg)" stroke="#1a60b0" stroke-width=".5"/><path d="M3.3 0L6.6 3.4 3.3 6.8 0 3.4Z" fill="#f05a2a" stroke="#c02010" stroke-width=".5"/><path d="M3.3 1.5L5 3.4 3.3 5.2 1.6 3.4Z" fill="#ff9a6a"/></svg>
<div class="mono" style="left:120px;top:346px;color:#0000ff">COLLECTION<span style="color:#ff0000"> [G]</span><span style="color:#000"></span></div>
<div class="a" style="left:101px;top:364px;width:9px;height:9px;border:1px solid #808080;background:#fff"><div class="a" style="left:1px;top:3px;width:5px;height:1px;background:#000"></div></div>
<svg style="left:118px;top:361px" width="16" height="16" viewBox="0 0 16 16"><defs><linearGradient id="cg" x1="0" y1="0" x2="0" y2="1"><stop offset="0" stop-color="#8ad4ff"/><stop offset=".45" stop-color="#2a9af0"/><stop offset="1" stop-color="#1070d0"/></linearGradient></defs><ellipse cx="6.8" cy="7" rx="6.5" ry="5" fill="url(#cg)" stroke="#1a60b0" stroke-width=".5"/><path d="M3.3 0L6.6 3.4 3.3 6.8 0 3.4Z" fill="#f05a2a" stroke="#c02010" stroke-width=".5"/><path d="M3.3 1.5L5 3.4 3.3 5.2 1.6 3.4Z" fill="#ff9a6a"/></svg>
<div class="mono" style="left:135px;top:362px;color:#0000ff">CONTAINER<span style="color:#ff0000"> [G]</span><span style="color:#000"></span></div>
<svg style="left:133px;top:377px" width="16" height="16" viewBox="0 0 16 16"><ellipse cx="6.8" cy="7" rx="6.5" ry="4.8" fill="url(#cg)" stroke="#1a60b0" stroke-width=".5"/></svg>
<div class="mono" style="left:150px;top:378px;color:#0000ff">ANY<span style="color:#ff0000"></span><span style="color:#000"></span></div>
<div class="a" style="left:41px;top:396px;width:9px;height:9px;border:1px solid #808080;background:#fff"><div class="a" style="left:1px;top:3px;width:5px;height:1px;background:#000"></div></div>
<svg style="left:58px;top:393px" width="16" height="16" viewBox="0 0 16 16"><defs><linearGradient id="cg" x1="0" y1="0" x2="0" y2="1"><stop offset="0" stop-color="#8ad4ff"/><stop offset=".45" stop-color="#2a9af0"/><stop offset="1" stop-color="#1070d0"/></linearGradient></defs><ellipse cx="6.8" cy="7" rx="6.5" ry="5" fill="url(#cg)" stroke="#1a60b0" stroke-width=".5"/><path d="M3.3 0L6.6 3.4 3.3 6.8 0 3.4Z" fill="#f05a2a" stroke="#c02010" stroke-width=".5"/><path d="M3.3 1.5L5 3.4 3.3 5.2 1.6 3.4Z" fill="#ff9a6a"/></svg>
<div class="mono" style="left:75px;top:394px;color:#0000ff">INDEXABLE<span style="color:#ff0000"> [G, H -&gt; INTEGER_32]</span><span style="color:#000"></span></div>
<div class="a" style="left:56px;top:412px;width:9px;height:9px;border:1px solid #808080;background:#fff"><div class="a" style="left:1px;top:3px;width:5px;height:1px;background:#000"></div></div>
<svg style="left:73px;top:409px" width="16" height="16" viewBox="0 0 16 16"><defs><linearGradient id="cg" x1="0" y1="0" x2="0" y2="1"><stop offset="0" stop-color="#8ad4ff"/><stop offset=".45" stop-color="#2a9af0"/><stop offset="1" stop-color="#1070d0"/></linearGradient></defs><ellipse cx="6.8" cy="7" rx="6.5" ry="5" fill="url(#cg)" stroke="#1a60b0" stroke-width=".5"/><path d="M3.3 0L6.6 3.4 3.3 6.8 0 3.4Z" fill="#f05a2a" stroke="#c02010" stroke-width=".5"/><path d="M3.3 1.5L5 3.4 3.3 5.2 1.6 3.4Z" fill="#ff9a6a"/></svg>
<div class="mono" style="left:90px;top:410px;color:#0000ff">TABLE<span style="color:#ff0000"> [G, H]</span><span style="color:#000"></span></div>
<svg style="left:88px;top:425px" width="16" height="16" viewBox="0 0 16 16"><defs><linearGradient id="cg" x1="0" y1="0" x2="0" y2="1"><stop offset="0" stop-color="#8ad4ff"/><stop offset=".45" stop-color="#2a9af0"/><stop offset="1" stop-color="#1070d0"/></linearGradient></defs><ellipse cx="6.8" cy="7" rx="6.5" ry="5" fill="url(#cg)" stroke="#1a60b0" stroke-width=".5"/><path d="M3.3 0L6.6 3.4 3.3 6.8 0 3.4Z" fill="#f05a2a" stroke="#c02010" stroke-width=".5"/><path d="M3.3 1.5L5 3.4 3.3 5.2 1.6 3.4Z" fill="#ff9a6a"/></svg>
<div class="mono" style="left:105px;top:426px;color:#0000ff">BAG<span style="color:#ff0000"> [G]</span><span style="color:#000">...</span></div>
<div class="a" style="left:41px;top:444px;width:9px;height:9px;border:1px solid #808080;background:#fff"><div class="a" style="left:1px;top:3px;width:5px;height:1px;background:#000"></div></div>
<svg style="left:58px;top:441px" width="16" height="16" viewBox="0 0 16 16"><defs><linearGradient id="cg" x1="0" y1="0" x2="0" y2="1"><stop offset="0" stop-color="#8ad4ff"/><stop offset=".45" stop-color="#2a9af0"/><stop offset="1" stop-color="#1070d0"/></linearGradient></defs><ellipse cx="6.8" cy="7" rx="6.5" ry="5" fill="url(#cg)" stroke="#1a60b0" stroke-width=".5"/><path d="M3.3 0L6.6 3.4 3.3 6.8 0 3.4Z" fill="#f05a2a" stroke="#c02010" stroke-width=".5"/><path d="M3.3 1.5L5 3.4 3.3 5.2 1.6 3.4Z" fill="#ff9a6a"/></svg>
<div class="mono" style="left:75px;top:442px;color:#0000ff">SEQUENCE<span style="color:#ff0000"> [G]</span><span style="color:#000"></span></div>
<svg style="left:73px;top:457px" width="16" height="16" viewBox="0 0 16 16"><defs><linearGradient id="cg" x1="0" y1="0" x2="0" y2="1"><stop offset="0" stop-color="#8ad4ff"/><stop offset=".45" stop-color="#2a9af0"/><stop offset="1" stop-color="#1070d0"/></linearGradient></defs><ellipse cx="6.8" cy="7" rx="6.5" ry="5" fill="url(#cg)" stroke="#1a60b0" stroke-width=".5"/><path d="M3.3 0L6.6 3.4 3.3 6.8 0 3.4Z" fill="#f05a2a" stroke="#c02010" stroke-width=".5"/><path d="M3.3 1.5L5 3.4 3.3 5.2 1.6 3.4Z" fill="#ff9a6a"/></svg>
<div class="mono" style="left:90px;top:458px;color:#0000ff">ACTIVE<span style="color:#ff0000"> [G]</span><span style="color:#000">...</span></div>
<div class="a" style="left:56px;top:476px;width:9px;height:9px;border:1px solid #808080;background:#fff"><div class="a" style="left:1px;top:3px;width:5px;height:1px;background:#000"></div></div>
<svg style="left:73px;top:473px" width="16" height="16" viewBox="0 0 16 16"><defs><linearGradient id="cg" x1="0" y1="0" x2="0" y2="1"><stop offset="0" stop-color="#8ad4ff"/><stop offset=".45" stop-color="#2a9af0"/><stop offset="1" stop-color="#1070d0"/></linearGradient></defs><ellipse cx="6.8" cy="7" rx="6.5" ry="5" fill="url(#cg)" stroke="#1a60b0" stroke-width=".5"/><path d="M3.3 0L6.6 3.4 3.3 6.8 0 3.4Z" fill="#f05a2a" stroke="#c02010" stroke-width=".5"/><path d="M3.3 1.5L5 3.4 3.3 5.2 1.6 3.4Z" fill="#ff9a6a"/></svg>
<div class="mono" style="left:90px;top:474px;color:#0000ff">BILINEAR<span style="color:#ff0000"> [G]</span><span style="color:#000"></span></div>
<div class="a" style="left:71px;top:492px;width:9px;height:9px;border:1px solid #808080;background:#fff"><div class="a" style="left:1px;top:3px;width:5px;height:1px;background:#000"></div></div>
<svg style="left:88px;top:489px" width="16" height="16" viewBox="0 0 16 16"><defs><linearGradient id="cg" x1="0" y1="0" x2="0" y2="1"><stop offset="0" stop-color="#8ad4ff"/><stop offset=".45" stop-color="#2a9af0"/><stop offset="1" stop-color="#1070d0"/></linearGradient></defs><ellipse cx="6.8" cy="7" rx="6.5" ry="5" fill="url(#cg)" stroke="#1a60b0" stroke-width=".5"/><path d="M3.3 0L6.6 3.4 3.3 6.8 0 3.4Z" fill="#f05a2a" stroke="#c02010" stroke-width=".5"/><path d="M3.3 1.5L5 3.4 3.3 5.2 1.6 3.4Z" fill="#ff9a6a"/></svg>
<div class="mono" style="left:105px;top:490px;color:#0000ff">LINEAR<span style="color:#ff0000"> [G]</span><span style="color:#000"></span></div>
<div class="a" style="left:86px;top:508px;width:9px;height:9px;border:1px solid #808080;background:#fff"><div class="a" style="left:1px;top:3px;width:5px;height:1px;background:#000"></div></div>
<svg style="left:103px;top:505px" width="16" height="16" viewBox="0 0 16 16"><defs><linearGradient id="cg" x1="0" y1="0" x2="0" y2="1"><stop offset="0" stop-color="#8ad4ff"/><stop offset=".45" stop-color="#2a9af0"/><stop offset="1" stop-color="#1070d0"/></linearGradient></defs><ellipse cx="6.8" cy="7" rx="6.5" ry="5" fill="url(#cg)" stroke="#1a60b0" stroke-width=".5"/><path d="M3.3 0L6.6 3.4 3.3 6.8 0 3.4Z" fill="#f05a2a" stroke="#c02010" stroke-width=".5"/><path d="M3.3 1.5L5 3.4 3.3 5.2 1.6 3.4Z" fill="#ff9a6a"/></svg>
<div class="mono" style="left:120px;top:506px;color:#0000ff">TRAVERSABLE<span style="color:#ff0000"> [G]</span><span style="color:#000"></span></div>
<svg style="left:118px;top:521px" width="16" height="16" viewBox="0 0 16 16"><defs><linearGradient id="cg" x1="0" y1="0" x2="0" y2="1"><stop offset="0" stop-color="#8ad4ff"/><stop offset=".45" stop-color="#2a9af0"/><stop offset="1" stop-color="#1070d0"/></linearGradient></defs><ellipse cx="6.8" cy="7" rx="6.5" ry="5" fill="url(#cg)" stroke="#1a60b0" stroke-width=".5"/><path d="M3.3 0L6.6 3.4 3.3 6.8 0 3.4Z" fill="#f05a2a" stroke="#c02010" stroke-width=".5"/><path d="M3.3 1.5L5 3.4 3.3 5.2 1.6 3.4Z" fill="#ff9a6a"/></svg>
<div class="mono" style="left:135px;top:522px;color:#0000ff">CONTAINER<span style="color:#ff0000"> [G]</span><span style="color:#000">...</span></div>
<svg style="left:88px;top:537px" width="16" height="16" viewBox="0 0 16 16"><defs><linearGradient id="cg" x1="0" y1="0" x2="0" y2="1"><stop offset="0" stop-color="#8ad4ff"/><stop offset=".45" stop-color="#2a9af0"/><stop offset="1" stop-color="#1070d0"/></linearGradient></defs><ellipse cx="6.8" cy="7" rx="6.5" ry="5" fill="url(#cg)" stroke="#1a60b0" stroke-width=".5"/><path d="M3.3 0L6.6 3.4 3.3 6.8 0 3.4Z" fill="#f05a2a" stroke="#c02010" stroke-width=".5"/><path d="M3.3 1.5L5 3.4 3.3 5.2 1.6 3.4Z" fill="#ff9a6a"/></svg>
<div class="mono" style="left:105px;top:538px;color:#0000ff">LINEAR<span style="color:#ff0000"> [G]</span><span style="color:#000">...</span></div>
<div class="a" style="left:56px;top:556px;width:9px;height:9px;border:1px solid #808080;background:#fff"><div class="a" style="left:1px;top:3px;width:5px;height:1px;background:#000"></div></div>
<svg style="left:73px;top:553px" width="16" height="16" viewBox="0 0 16 16"><defs><linearGradient id="cg" x1="0" y1="0" x2="0" y2="1"><stop offset="0" stop-color="#8ad4ff"/><stop offset=".45" stop-color="#2a9af0"/><stop offset="1" stop-color="#1070d0"/></linearGradient></defs><ellipse cx="6.8" cy="7" rx="6.5" ry="5" fill="url(#cg)" stroke="#1a60b0" stroke-width=".5"/><path d="M3.3 0L6.6 3.4 3.3 6.8 0 3.4Z" fill="#f05a2a" stroke="#c02010" stroke-width=".5"/><path d="M3.3 1.5L5 3.4 3.3 5.2 1.6 3.4Z" fill="#ff9a6a"/></svg>
<div class="mono" style="left:90px;top:554px;color:#0000ff">FINITE<span style="color:#ff0000"> [G]</span><span style="color:#000"></span></div>
<div class="a" style="left:71px;top:572px;width:9px;height:9px;border:1px solid #808080;background:#fff"><div class="a" style="left:1px;top:3px;width:5px;height:1px;background:#000"></div></div>
<svg style="left:88px;top:569px" width="16" height="16" viewBox="0 0 16 16"><defs><linearGradient id="cg" x1="0" y1="0" x2="0" y2="1"><stop offset="0" stop-color="#8ad4ff"/><stop offset=".45" stop-color="#2a9af0"/><stop offset="1" stop-color="#1070d0"/></linearGradient></defs><ellipse cx="6.8" cy="7" rx="6.5" ry="5" fill="url(#cg)" stroke="#1a60b0" stroke-width=".5"/><path d="M3.3 0L6.6 3.4 3.3 6.8 0 3.4Z" fill="#f05a2a" stroke="#c02010" stroke-width=".5"/><path d="M3.3 1.5L5 3.4 3.3 5.2 1.6 3.4Z" fill="#ff9a6a"/></svg>
<div class="mono" style="left:105px;top:570px;color:#0000ff">BOX<span style="color:#ff0000"> [G]</span><span style="color:#000"></span></div>
<svg style="left:103px;top:585px" width="16" height="16" viewBox="0 0 16 16"><defs><linearGradient id="cg" x1="0" y1="0" x2="0" y2="1"><stop offset="0" stop-color="#8ad4ff"/><stop offset=".45" stop-color="#2a9af0"/><stop offset="1" stop-color="#1070d0"/></linearGradient></defs><ellipse cx="6.8" cy="7" rx="6.5" ry="5" fill="url(#cg)" stroke="#1a60b0" stroke-width=".5"/><path d="M3.3 0L6.6 3.4 3.3 6.8 0 3.4Z" fill="#f05a2a" stroke="#c02010" stroke-width=".5"/><path d="M3.3 1.5L5 3.4 3.3 5.2 1.6 3.4Z" fill="#ff9a6a"/></svg>
<div class="mono" style="left:120px;top:586px;color:#0000ff">CONTAINER<span style="color:#ff0000"> [G]</span><span style="color:#000">...</span></div>
<svg style="left:58px;top:601px" width="16" height="16" viewBox="0 0 16 16"><defs><linearGradient id="cg" x1="0" y1="0" x2="0" y2="1"><stop offset="0" stop-color="#8ad4ff"/><stop offset=".45" stop-color="#2a9af0"/><stop offset="1" stop-color="#1070d0"/></linearGradient></defs><ellipse cx="6.8" cy="7" rx="6.5" ry="5" fill="url(#cg)" stroke="#1a60b0" stroke-width=".5"/><path d="M3.3 0L6.6 3.4 3.3 6.8 0 3.4Z" fill="#f05a2a" stroke="#c02010" stroke-width=".5"/><path d="M3.3 1.5L5 3.4 3.3 5.2 1.6 3.4Z" fill="#ff9a6a"/></svg>
<div class="mono" style="left:75px;top:602px;color:#0000ff">SEQUENCE<span style="color:#ff0000"> [G]</span><span style="color:#000">...</span></div>
<div class="a" style="left:4px;top:621px;width:722px;height:22px;background:#d4d0c8;box-shadow:inset 0 -1px #808080"></div>
<div class="a" style="left:725px;top:621px;width:1px;height:22px;background:#808080"></div>
<div class="a" style="left:5px;top:621px;width:56px;height:20px;background:#d4d0c8;box-shadow:inset 1px 0 #fff,inset -1px -1px #404040,inset -2px -2px #808080"></div>
<div class="a" style="left:61px;top:621px;width:72px;height:18px;background:#d4d0c8;box-shadow:inset 1px 0 #fff,inset -1px -1px #404040,inset -2px -2px #808080"></div>
<div class="a" style="left:134px;top:621px;width:73px;height:18px;background:#d4d0c8;box-shadow:inset 1px 0 #fff,inset -1px -1px #404040,inset -2px -2px #808080"></div>
<div class="a" style="left:207px;top:621px;width:79px;height:18px;background:#d4d0c8;box-shadow:inset 1px 0 #fff,inset -1px -1px #404040,inset -2px -2px #808080"></div>
<div class="a" style="left:287px;top:621px;width:124px;height:18px;background:#d4d0c8;box-shadow:inset 1px 0 #fff,inset -1px -1px #404040,inset -2px -2px #808080"></div>
<svg style="left:10px;top:626px" width="16" height="16" viewBox="0 0 16 16"><ellipse cx="6.8" cy="7" rx="6.5" ry="4.8" fill="url(#cg)" stroke="#1a60b0" stroke-width=".5"/></svg>
<div class="t" style="left:29px;top:626px;font-weight:bold;font-size:11px">Class</div>
<svg style="left:66px;top:624px" width="16" height="16" viewBox="0 0 16 16"><path d="M5 5V15M0 10H10" stroke="#1a6a10" stroke-width="4.4"/><path d="M5 5.6V14.4M0.6 10H9.4" stroke="#3ab82a" stroke-width="3.2"/><rect x="10" y="1" width="6" height="1" fill="#222"/><rect x="10" y="3" width="6" height="1" fill="#222"/><rect x="10" y="5" width="6" height="1" fill="#222"/></svg>
<div class="t" style="left:85px;top:625px;">Feature</div>
<svg style="left:138px;top:623px" width="16" height="16" viewBox="0 0 16 16"><rect x="0.5" y="0.5" width="15" height="14" fill="#f4f6ff" stroke="#2a62e0"/><rect x="1" y="1" width="14" height="2.5" fill="#3a72e8"/><rect x="2" y="5" width="12" height="1" fill="#6a7ab0"/><rect x="2" y="7" width="12" height="1" fill="#6a7ab0"/><rect x="2" y="9" width="12" height="1" fill="#6a7ab0"/><rect x="2" y="11" width="12" height="1" fill="#6a7ab0"/><rect x="2" y="13" width="12" height="1" fill="#6a7ab0"/></svg>
<div class="t" style="left:157px;top:625px;">Outputs</div>
<svg style="left:210px;top:623px" width="16" height="16" viewBox="0 0 16 16"><path d="M0.5 2.5H11.5V15.5H0.5Z" fill="#f0f0e8" stroke="#887"/><rect x="3" y="0.5" width="6" height="3" fill="#ccc" stroke="#777" stroke-width=".8"/><rect x="2.5" y="6" width="6" height="1" fill="#999"/><rect x="2.5" y="8" width="6" height="1" fill="#999"/><rect x="2.5" y="10" width="6" height="1" fill="#999"/><circle cx="11" cy="11.5" r="4.5" fill="#e83a1a"/><path d="M9.3 9.8L12.7 13.2M12.7 9.8L9.3 13.2" stroke="#fff" stroke-width="1.3"/></svg>
<div class="t" style="left:230px;top:625px;">Error List</div>
<svg style="left:292px;top:626px" width="9" height="9" viewBox="0 0 9 9"><path d="M4.5 0V9M0 4.5H9" stroke="#aaa" stroke-width="3"/><path d="M4.5 1V8M1 4.5H8" stroke="#eee" stroke-width="1.4"/></svg>
<div class="t" style="left:309px;top:625px;">AutoTest Results</div>
<div class="a" style="left:4px;top:643px;width:722px;height:26px;background:#e9e7e2"></div>
<div class="a" style="left:4px;top:647px;width:67px;height:21px;background:#d4d0c8;box-shadow:inset 1px 1px #808080,inset -1px 0 #808080"></div>
<div class="a" style="left:81px;top:647px;width:89px;height:21px;background:#d4d0c8;box-shadow:inset 1px 1px #808080,inset -1px 0 #808080"></div>
<div class="a" style="left:169px;top:647px;width:63px;height:21px;background:#d4d0c8;box-shadow:inset 1px 1px #808080,inset -1px 0 #808080"></div>
<div class="a" style="left:231px;top:647px;width:48px;height:21px;background:#d4d0c8;box-shadow:inset 1px 1px #808080,inset -1px 0 #808080"></div>
<svg style="left:10px;top:649px" width="16" height="16" viewBox="0 0 16 16"><path d="M3.5 11.5L11.5 3.5 15 7 7 15Z" fill="#30c020" stroke="#1a6a10" stroke-width=".8"/><path d="M5 11L12 4" stroke="#8af070" stroke-width="1"/><path d="M11.5 3.5L13 2 16.5 5.5 15 7Z" fill="#f04020" stroke="#a02010" stroke-width=".5"/><path d="M3.5 11.5L7 15 2 16.5Z" fill="#e8d050" stroke="#444" stroke-width=".5"/><path d="M0 15.5H14" stroke="#2a3ae8" stroke-width="1"/></svg>
<div class="t" style="left:28px;top:651px;">Diagram</div>
<svg style="left:86px;top:651px" width="16" height="16" viewBox="0 0 16 16"><path d="M0.5 3.5H8M0.5 7.5H8" stroke="#10a010" stroke-width="2"/><path d="M6.5 0.5L15.5 5.5 6.5 10.5Z" fill="#40d020" stroke="#109010" stroke-width="1"/></svg>
<div class="t" style="left:105px;top:651px;">Dependency</div>
<svg style="left:174px;top:650px" width="16" height="16" viewBox="0 0 16 16"><rect x="0.5" y="0.5" width="15" height="14" fill="#f4f6ff" stroke="#2a62e0"/><rect x="1" y="1" width="14" height="2.5" fill="#3a72e8"/><circle cx="10" cy="10.5" r="5" fill="#e8d030"/><path d="M10 10.5V5.5A5 5 0 0 1 15 10.5Z" fill="#3ab030"/><path d="M10 10.5H5A5 5 0 0 1 10 5.5Z" fill="#e03a2a"/></svg>
<div class="t" style="left:193px;top:651px;">Metrics</div>
<svg style="left:236px;top:650px" width="16" height="16" viewBox="0 0 16 16"><rect x="0.5" y="0.5" width="15" height="14" fill="#f4f6ff" stroke="#2a62e0"/><rect x="1" y="1" width="14" height="2.5" fill="#3a72e8"/><circle cx="11" cy="6" r="2.5" fill="#3a8ae8"/><path d="M1 10L5 7V13Z" fill="#3ab030"/><rect x="8" y="10" width="3" height="5" fill="#333"/><rect x="12" y="10" width="3" height="5" fill="#333"/><rect x="10" y="9" width="3" height="3" fill="#555"/></svg>
<div class="t" style="left:255px;top:651px;">Info</div>
<div class="a" style="left:4px;top:669px;width:455px;height:18px;box-shadow:inset 1px 1px #808080,inset -1px -1px #fff"></div>
<div class="a" style="left:460px;top:669px;width:101px;height:18px;box-shadow:inset 2px 2px #808080,inset -1px -1px #fff"></div>
<div class="a" style="left:562px;top:669px;width:76px;height:18px;box-shadow:inset 1px 1px #808080,inset -1px -1px #fff"></div>
<div class="a" style="left:639px;top:669px;width:51px;height:18px;box-shadow:inset 1px 1px #808080,inset -1px -1px #fff"></div>
<div class="a" style="left:691px;top:669px;width:19px;height:18px;box-shadow:inset 1px 1px #808080,inset -1px -1px #fff"></div>
<div class="a" style="left:711px;top:669px;width:19px;height:18px;box-shadow:inset 1px 1px #808080,inset -1px -1px #fff"></div>
<div class="a" style="left:731px;top:669px;width:19px;height:18px;box-shadow:inset 1px 1px #808080,inset -1px -1px #fff"></div>
<div class="t" style="left:567px;top:673px;">simple:classic</div>
<div class="t" style="left:656px;top:673px;">1:1</div>
<svg style="left:693px;top:670px" width="16" height="16" viewBox="0 0 16 16"><path d="M1.5 1.5H10L12.5 4V15.5H1.5Z" fill="#f4f6ff" stroke="#2a62e0"/><circle cx="11" cy="3" r="1.8" fill="#fff" stroke="#2a62e0"/><path d="M1.5 8.5L6 13L15.5 3" fill="none" stroke="#1a8a10" stroke-width="3"/><path d="M2 8.8L6 12.5 15 3.5" fill="none" stroke="#48c838" stroke-width="1.2"/></svg>
<svg style="left:713px;top:670px" width="16" height="16" viewBox="0 0 16 16"><path d="M1 8L8 4.5 15 8 8 11.5Z" fill="#fff" stroke="#6a6ab8" stroke-width=".8"/><path d="M1 8V12L8 15.5 15 12V8" fill="#b8b8e0" stroke="#6a6ab8" stroke-width=".8"/><path d="M1 10L8 13.5 15 10" fill="none" stroke="#8a8ad0" stroke-width=".6"/><path d="M4 2L6 1 8 2.5" fill="#fff" stroke="#6a6ab8" stroke-width=".8"/><path d="M3 5.5L7 9L15 1.5" fill="none" stroke="#1a8a10" stroke-width="3"/><path d="M3.5 5.8L7 8.5 14.5 2" fill="none" stroke="#48c838" stroke-width="1.2"/></svg>
</body></html>
